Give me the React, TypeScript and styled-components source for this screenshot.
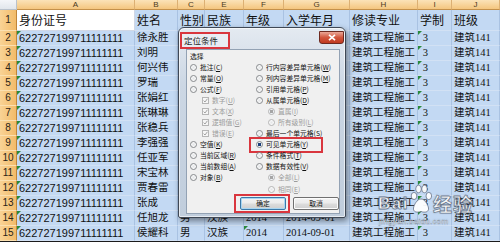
import { Fragment } from 'react';
import styled, { createGlobalStyle, css } from 'styled-components';

const GlobalStyle = createGlobalStyle`
    html, body {
        margin: 0;
        padding: 0;
        background: #ffffff;
        overflow: hidden;
    }
`;

const Page = styled.div`
    position: relative;
    width: 500px;
    height: 242px;
    overflow: hidden;
`;

// Worksheet
const Sheet = styled.div`
    display: grid;
    grid-template-columns: 17px 118px 43px 27px 39px 40px 66px 68px 34px 48px;
    grid-template-rows: 10px 21px repeat(14, 15px);
    border-bottom: 1px solid #1b1b1b;
`;

const Corner = styled.div`
    box-sizing: border-box;
    background: linear-gradient(#f4f6f9, #e1e6ec);
    border-right: 1px solid #b9c2cc;
    border-bottom: 1px solid #b9c2cc;
`;

const ColHead = styled.div`
    box-sizing: border-box;
    display: flex;
    align-items: center;
    justify-content: center;
    background: linear-gradient(#fbe3b8, #f4c67f);
    border-right: 1px solid #dcb073;
    border-bottom: 1px solid #c4914a;
    font: 8px/10px "Liberation Sans", sans-serif;
    color: #4a3a22;
`;

const RowHead = styled.div`
    box-sizing: border-box;
    display: flex;
    align-items: center;
    justify-content: center;
    background: linear-gradient(90deg, #f9d395, #f2bb69);
    border-right: 1px solid #c0863a;
    border-bottom: 1px solid #fbe0b0;
    font: 10px/14px "Liberation Sans", sans-serif;
    color: #2a2418;
`;

const Cell = styled.div<{ $sel?: boolean; $big?: boolean; $sans?: boolean; $flag?: boolean }>`
    position: relative;
    box-sizing: border-box;
    display: flex;
    align-items: flex-end;
    padding-left: 2px;
    overflow: hidden;
    white-space: nowrap;
    background: ${p => (p.$sel ? '#c3d9f3' : '#ffffff')};
    border-right: 1px solid ${p => (p.$sel ? '#a9c2e2' : '#d0d7e5')};
    border-bottom: 1px solid ${p => (p.$sel ? '#d2e1f4' : '#d0d7e5')};
    font-family: ${p => (p.$sans ? '"Liberation Sans"' : '"Liberation Serif"')}, "Noto Sans CJK SC", sans-serif;
    font-size: ${p => (p.$big ? '12px' : p.$sans ? '11px' : '10.5px')};
    line-height: ${p => (p.$big ? '17px' : '14px')};
    color: #111;

    ${p =>
        p.$flag &&
        css`
            &::before {
                content: '';
                position: absolute;
                left: 0;
                top: 0;
                border-top: 4px solid #2a8a3c;
                border-right: 4px solid transparent;
            }
        `}
`;

// Go To Special dialog
const Dialog = styled.div`
    position: absolute;
    left: 178px;
    top: 27px;
    width: 168px;
    height: 191px;
    box-sizing: border-box;
    display: flex;
    flex-direction: column;
    border: 1px solid #3f4855;
    border-radius: 6px 6px 2px 2px;
    background: linear-gradient(180deg, #e4eaf1 0%, #ccd7e4 30%, #c0cddc 100%);
    box-shadow: 2px 3px 6px rgba(0, 0, 0, 0.45), inset 0 0 0 1px rgba(255, 255, 255, 0.6);
`;

const TitleBar = styled.div`
    height: 22px;
    display: flex;
    justify-content: space-between;
    align-items: flex-start;
`;

const TitleMark = styled.div`
    box-sizing: border-box;
    width: 50px;
    height: 17px;
    margin: 4px 0 0 1px;
    padding-left: 2px;
    border: 2px solid #d9363e;
    background: rgba(236, 240, 245, 0.7);
    font: 8.5px/13px "Noto Sans CJK SC", sans-serif;
    color: #1a1a1a;
`;

const CloseBtn = styled.div`
    box-sizing: border-box;
    width: 25px;
    height: 13px;
    margin: 3px 1px 0 0;
    display: flex;
    align-items: center;
    justify-content: center;
    border: 1px solid #6e2a20;
    border-radius: 0 0 3px 3px;
    background: linear-gradient(#eba898 0%, #d2573e 50%, #c0391f 100%);
`;

const Frame = styled.div`
    flex: 1;
    display: flex;
    padding: 0 5px 4px 7px;
`;

const Client = styled.div`
    flex: 1;
    display: flex;
    flex-direction: column;
    padding: 2px 0 0 3px;
    background: #f0f0f0;
    border: 1px solid #93a2b4;
    font-family: "Noto Sans CJK SC", sans-serif;
`;

const Legend = styled.div`
    height: 9.5px;
    font-size: 6.8px;
    line-height: 9.5px;
    color: #111;
`;

const Options = styled.div`
    display: grid;
    grid-template-columns: 66px 1fr;
`;

const OptionCol = styled.div`
    display: flex;
    flex-direction: column;
`;

const Option = styled.div<{ $sub?: boolean; $off?: boolean; $mark?: boolean }>`
    position: relative;
    height: 11.1px;
    display: flex;
    align-items: center;
    gap: 3px;
    padding-left: ${p => (p.$sub ? '12px' : '0')};
    font-size: 6.8px;
    line-height: 9px;
    white-space: nowrap;
    color: ${p => (p.$off ? '#9c9c9c' : '#111')};

    ${p =>
        p.$mark &&
        css`
            &::after {
                content: '';
                position: absolute;
                left: -7px;
                top: -2px;
                width: 74px;
                height: 16px;
                box-sizing: border-box;
                border: 2px solid #d9363e;
            }
        `}
`;

const Key = styled.span`
    text-decoration: underline;
`;

const Radio = styled.span<{ $on?: boolean; $off?: boolean }>`
    flex: none;
    width: 7px;
    height: 7px;
    box-sizing: border-box;
    border-radius: 50%;
    border: 1px solid ${p => (p.$off ? '#b5b5b5' : '#86898c')};
    background: ${p =>
        p.$on
            ? `radial-gradient(circle, ${p.$off ? '#a5a5a5' : '#1d3f78'} 0 1.5px, #eef2f6 1.9px)`
            : 'radial-gradient(circle, #e4e6e8 0, #ffffff 3px)'};
`;

const Check = styled.span`
    flex: none;
    width: 7px;
    height: 7px;
    box-sizing: border-box;
    border: 1px solid #b5b5b5;
    background: #f6f6f6;
    display: flex;
    align-items: center;
    justify-content: center;
`;

const ButtonRow = styled.div`
    display: flex;
    justify-content: flex-end;
    align-items: center;
    gap: 3px;
    margin-top: -1px;
`;

const FocusMark = styled.div`
    border: 2px solid #d9363e;
    padding: 1px 2px 1px 4px;
`;

const Btn = styled.div<{ $def?: boolean }>`
    width: 46px;
    height: 13px;
    box-sizing: border-box;
    display: flex;
    align-items: center;
    justify-content: center;
    border: 1px solid ${p => (p.$def ? '#3b79a8' : '#707070')};
    border-radius: 2px;
    background: linear-gradient(#f4f4f4 0%, #ebebeb 48%, #dddddd 52%, #cfcfcf 100%);
    box-shadow: ${p => (p.$def ? 'inset 0 0 0 1px #a9d6f2' : 'inset 0 0 0 1px #fcfcfc')};
    font: 6.8px/11px "Noto Sans CJK SC", sans-serif;
    color: #111;
`;

// baidu jingyan watermark
const Watermark = styled.div`
    position: absolute;
    left: 378px;
    top: 184px;
    display: flex;
    flex-direction: column;
    pointer-events: none;
    color: rgba(255, 255, 255, 0.92);
    -webkit-text-stroke: 0.8px rgba(70, 82, 105, 0.7);
    text-shadow: 0 0 2px rgba(60, 70, 90, 0.45);
`;

const MarkLine = styled.div`
    display: flex;
    align-items: flex-end;
    gap: 1px;
`;

const MarkWord = styled.span<{ $cjk?: boolean }>`
    font-family: ${p => (p.$cjk ? '"Noto Sans CJK SC"' : '"Liberation Sans"')}, sans-serif;
    font-weight: 700;
    font-size: ${p => (p.$cjk ? '19px' : '17px')};
    line-height: 18px;
    letter-spacing: ${p => (p.$cjk ? '1px' : '1.5px')};
`;

const MarkUrl = styled.div`
    margin: 4px 0 0 1px;
    font: 8px/9px "Liberation Sans", sans-serif;
    letter-spacing: 0.3px;
    -webkit-text-stroke: 0.3px rgba(70, 82, 105, 0.6);
`;

const cols = ['A', 'B', 'C', 'E', 'F', 'G', 'H', 'I', 'J'];
const titles = ['身份证号', '姓名', '性别', '民族', '年级', '入学年月', '修读专业', '学制', '班级'];
const names = ['徐永胜', '刘明', '何兴伟', '罗瑞', '张娟红', '张琳琳', '张稳兵', '李强强', '任亚军', '宋宝林', '贾春雷', '张成', '任旭龙', '侯耀科'];

type Item = { t: string; k: string; sub?: boolean; box?: boolean; on?: boolean; mark?: boolean };

const leftItems: Item[] = [
    { t: '批注', k: 'C' },
    { t: '常量', k: 'O' },
    { t: '公式', k: 'F' },
    { t: '数字', k: 'U', sub: true, box: true },
    { t: '文本', k: 'X', sub: true, box: true },
    { t: '逻辑值', k: 'G', sub: true, box: true },
    { t: '错误', k: 'E', sub: true, box: true },
    { t: '空值', k: 'K' },
    { t: '当前区域', k: 'R' },
    { t: '当前数组', k: 'A' },
    { t: '对象', k: 'B' },
];

const rightItems: Item[] = [
    { t: '行内容差异单元格', k: 'W' },
    { t: '列内容差异单元格', k: 'M' },
    { t: '引用单元格', k: 'P' },
    { t: '从属单元格', k: 'D' },
    { t: '直属', k: 'I', sub: true, on: true },
    { t: '所有级别', k: 'L', sub: true },
    { t: '最后一个单元格', k: 'S' },
    { t: '可见单元格', k: 'Y', on: true, mark: true },
    { t: '条件格式', k: 'T' },
    { t: '数据有效性', k: 'V' },
    { t: '全部', k: 'L', sub: true, on: true },
    { t: '相同', k: 'E', sub: true },
];

function OptionList({ items }: { items: Item[] }) {
    return (
        <OptionCol>
            {items.map(it => (
                <Option key={it.t} $sub={it.sub} $off={it.sub} $mark={it.mark}>
                    {it.box ? (
                        <Check>
                            <svg width="5" height="5" viewBox="0 0 5 5">
                                <path d="M0.6 2.6 L2 4 L4.4 0.8" fill="none" stroke="#9a9a9a" strokeWidth="0.9" />
                            </svg>
                        </Check>
                    ) : (
                        <Radio $on={it.on} $off={it.sub} />
                    )}
                    <span>
                        {it.t}(<Key>{it.k}</Key>)
                    </span>
                </Option>
            ))}
        </OptionCol>
    );
}

function Paw() {
    return (
        <svg width="22" height="30" viewBox="0 0 22 30" style={{ flex: 'none', marginBottom: -1 }}>
            <g fill="rgba(255,255,255,0.92)" stroke="rgba(70,82,105,0.7)" strokeWidth="0.9">
                <ellipse cx="4" cy="12" rx="2.8" ry="3.6" />
                <ellipse cx="8.5" cy="5" rx="2.8" ry="3.8" />
                <ellipse cx="14.5" cy="5" rx="2.8" ry="3.8" />
                <ellipse cx="18.8" cy="12" rx="2.8" ry="3.6" />
                <path d="M11 15 C7 15 4 21 3.5 24 C3 28 7 29 11 27.5 C15 29 19 28 18.5 24 C18 21 15 15 11 15 Z" />
            </g>
        </svg>
    );
}

export default function App() {
    return (
        <>
            <GlobalStyle />
            <Page>
                <Sheet>
                    <Corner />
                    {cols.map(c => (
                        <ColHead key={c}>{c}</ColHead>
                    ))}

                    <RowHead>1</RowHead>
                    {titles.map((t, i) => (
                        <Cell key={t} $big $sel={i > 0}>
                            {t}
                        </Cell>
                    ))}

                    {names.map((n, r) => (
                        <Fragment key={n}>
                            <RowHead>{r + 2}</RowHead>
                            <Cell $sel $sans $flag>622727199711111111</Cell>
                            <Cell $sel>{n}</Cell>
                            <Cell $sel>男</Cell>
                            <Cell $sel>汉族</Cell>
                            <Cell $sel $flag={r === 13}>2014</Cell>
                            <Cell $sel>2014-09-01</Cell>
                            <Cell $sel>建筑工程施工</Cell>
                            <Cell $sel $flag>&nbsp;3</Cell>
                            <Cell $sel>建筑141</Cell>
                        </Fragment>
                    ))}
                </Sheet>

                <Dialog>
                    <TitleBar>
                        <TitleMark>定位条件</TitleMark>
                        <CloseBtn>
                            <svg width="8" height="7" viewBox="0 0 8 7">
                                <path d="M1 0.8 L7 6.2 M7 0.8 L1 6.2" stroke="#ffffff" strokeWidth="1.7" />
                            </svg>
                        </CloseBtn>
                    </TitleBar>
                    <Frame>
                        <Client>
                            <Legend>选择</Legend>
                            <Options>
                                <OptionList items={leftItems} />
                                <OptionList items={rightItems} />
                            </Options>
                            <ButtonRow>
                                <FocusMark>
                                    <Btn $def>确定</Btn>
                                </FocusMark>
                                <Btn>取消</Btn>
                            </ButtonRow>
                        </Client>
                    </Frame>
                </Dialog>

                <Watermark>
                    <MarkLine>
                        <MarkWord>Bai</MarkWord>
                        <Paw />
                        <MarkWord $cjk>经验</MarkWord>
                    </MarkLine>
                    <MarkUrl>jingyan.baidu.com</MarkUrl>
                </Watermark>
            </Page>
        </>
    );
}
